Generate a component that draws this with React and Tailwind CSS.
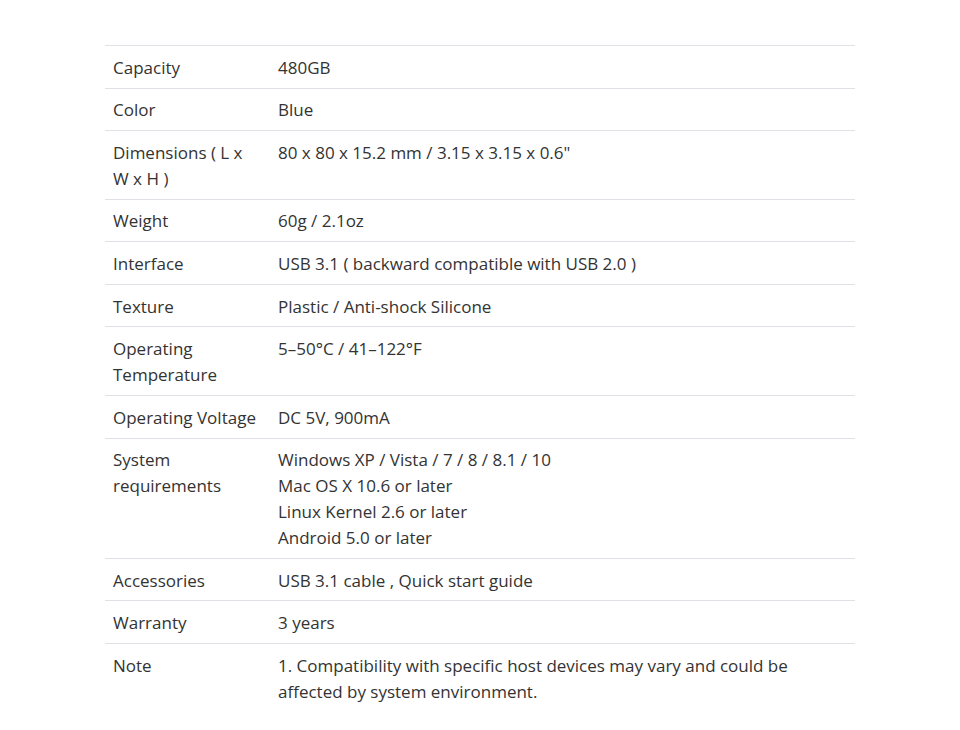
export default function App() {
  const rows = [
    ["Capacity", ["480GB"]],
    ["Color", ["Blue"]],
    ["Dimensions ( L x W x H )", ['80 x 80 x 15.2 mm / 3.15 x 3.15 x 0.6"']],
    ["Weight", ["60g / 2.1oz"]],
    ["Interface", ["USB 3.1 ( backward compatible with USB 2.0 )"]],
    ["Texture", ["Plastic / Anti-shock Silicone"]],
    ["Operating Temperature", ["5\u201350\u00b0C / 41\u2013122\u00b0F"]],
    ["Operating Voltage", ["DC 5V, 900mA"]],
    [
      "System requirements",
      [
        "Windows XP / Vista / 7 / 8 / 8.1 / 10",
        "Mac OS X 10.6 or later",
        "Linux Kernel 2.6 or later",
        "Android 5.0 or later",
      ],
    ],
    ["Accessories", ["USB 3.1 cable , Quick start guide"]],
    ["Warranty", ["3 years"]],
    [
      "Note",
      [
        "1. Compatibility with specific host devices may vary and could be affected by system environment.",
      ],
    ],
  ];
  return (
    <div
      className="min-h-[730px] bg-white pt-[45px] text-[17px] leading-[25.9px] text-[#333]"
      style={{ fontFamily: '"Open Sans", "Noto Sans", sans-serif' }}
    >
      <table className="mx-auto w-[750px] border-collapse">
        <tbody>
          {rows.map(([k, v], i) => (
            <tr
              key={k}
              className={i < rows.length - 1 ? "border-t border-b border-[#dee2e6]" : "border-t border-[#dee2e6]"}
            >
              <td className="w-[165px] px-2 pt-[8.8px] pb-[6.9px] align-top">{k}</td>
              <td className="px-2 pt-[8.8px] pb-[6.9px] align-top">
                {v.map((line) => (
                  <div key={line}>{line}</div>
                ))}
              </td>
            </tr>
          ))}
        </tbody>
      </table>
    </div>
  );
}
